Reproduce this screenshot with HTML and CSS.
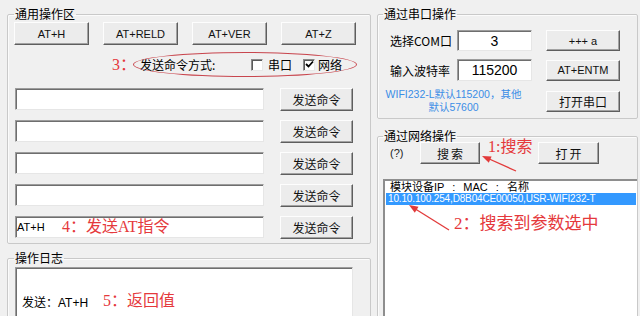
FILE: index.html
```html
<!DOCTYPE html>
<html lang="zh-CN">
<head>
<meta charset="utf-8">
<title>USR-WIFI232 设置</title>
<link rel="stylesheet" href="styles.css">
</head>
<body>
<div class="app">
  <div class="col-left">
    <fieldset class="group general">
      <legend>通用操作区</legend>
      <div class="quick-row">
        <div class="btn quick">AT+H</div>
        <div class="btn quick">AT+RELD</div>
        <div class="btn quick">AT+VER</div>
        <div class="btn quick">AT+Z</div>
      </div>
      <div class="mode-row">
        <span class="note n3">3：</span>
        <div class="ellipse">
          <span class="mode-label">发送命令方式:</span>
          <span class="box b1"></span><span class="chk-label">串口</span>
          <span class="box b2"><svg width="9" height="9" viewBox="0 0 9 9"><polyline points="1,4 3.5,6.5 8,1.5" fill="none" stroke="#000" stroke-width="1.8"/></svg></span><span class="chk-label">网络</span>
        </div>
      </div>
      <div class="cmd-list">
        <div class="cmd-row"><div class="field wide"></div><div class="btn send">发送命令</div></div>
        <div class="cmd-row"><div class="field wide"></div><div class="btn send">发送命令</div></div>
        <div class="cmd-row"><div class="field wide"></div><div class="btn send">发送命令</div></div>
        <div class="cmd-row"><div class="field wide"></div><div class="btn send">发送命令</div></div>
        <div class="cmd-row"><div class="field wide filled"><span class="cmd-text">AT+H</span><span class="note n4">4：发送AT指令</span></div><div class="btn send">发送命令</div></div>
      </div>
    </fieldset>
    <fieldset class="group log">
      <legend>操作日志</legend>
      <div class="field logbox">
        <span class="log-line">发送：AT+H</span>
        <span class="note n5">5：返回值</span>
      </div>
    </fieldset>
  </div>
  <div class="col-right">
    <fieldset class="group serial">
      <legend>通过串口操作</legend>
      <div class="serial-grid">
        <span class="s-label">选择COM口</span>
        <div class="field num">3</div>
        <div class="btn s-btn">+++ a</div>
        <span class="s-label">输入波特率</span>
        <div class="field num">115200</div>
        <div class="btn s-btn">AT+ENTM</div>
        <div class="hint">WIFI232-L默认115200，其他<br>默认57600</div>
        <div class="btn s-btn cjk">打开串口</div>
      </div>
    </fieldset>
    <fieldset class="group net">
      <legend>通过网络操作</legend>
      <div class="net-row">
        <span class="help">(?)</span>
        <div class="btn net-btn search">搜索</div>
        <span class="note n1">1:搜索</span>
        <div class="btn net-btn open">打开</div>
      </div>
      <div class="listbox">
        <div class="list-head">模块设备IP : MAC : 名称</div>
        <div class="list-item selected">10.10.100.254,D8B04CE00050,USR-WIFI232-T</div>
        <div class="note n2">2：搜索到参数选中</div>
      </div>
    </fieldset>
  </div>
</div>
<svg class="arrows" width="640" height="316" viewBox="0 0 640 316">
  <line x1="516" y1="171" x2="487" y2="158" stroke="#e23a3a" stroke-width="1.3"/>
  <polygon points="482,156 491.6,156.4 488.8,162.8" fill="#e23a3a"/>
  <line x1="449" y1="230" x2="413" y2="207.5" stroke="#e23a3a" stroke-width="1.3"/>
  <polygon points="409,205 418.5,206.8 414.8,212.8" fill="#e23a3a"/>
</svg>
</body>
</html>
```
FILE: styles.css
```css
* { box-sizing: border-box; }
html, body { margin: 0; }
body {
  width: 640px;
  height: 316px;
  overflow: hidden;
  position: relative;
  background: #f0f0f0;
  font-family: "Liberation Sans", "Noto Sans CJK SC", sans-serif;
  font-size: 12px;
  color: #000;
}
.app { display: flex; padding: 7px 0 0 7px; gap: 6px; }
.col-left { width: 364px; display: flex; flex-direction: column; gap: 7px; }
.col-right { width: 261px; display: flex; flex-direction: column; gap: 11px; }

.group {
  margin: 0;
  min-width: 0;
  border: 1px solid #c9c9c9;
  border-radius: 2px;
  box-shadow: inset 1px 1px 0 #fbfbfb;
}
.group > legend {
  padding: 0 1px;
  font-family: "Noto Sans CJK SC", sans-serif;
  font-size: 12px;
  line-height: 14px;
}
.general { padding: 1px 6px 3px 6px; }
.log { padding: 2px 6px 0 6px; height: 80px; }
.serial { padding: 9px 5px 5px 5px; }
.net { padding: 0 5px; height: 200px; }
.net > legend { line-height: 12px; }

.btn {
  display: flex;
  align-items: center;
  justify-content: center;
  height: 23px;
  background: #ececec;
  border: 1px solid;
  border-color: #fdfdfd #5e5e5e #5e5e5e #fdfdfd;
  box-shadow: inset -1px -1px 0 #a2a2a2;
  font-size: 11px;
  color: #111;
}
.cjk, .send, .net-btn { font-size: 12px; }

.field {
  background: #fff;
  border: 1px solid;
  border-color: #9c9c9c #e6e6e6 #e6e6e6 #9c9c9c;
  box-shadow: inset 1px 1px 0 #6e6e6e;
}

.note {
  color: #e5393c;
  font-family: "Liberation Serif", "Noto Sans CJK SC", serif;
  font-size: 16px;
  line-height: 18px;
  white-space: nowrap;
}

.quick-row { display: flex; gap: 14px; }
.quick { width: 75px; }

.mode-row { display: flex; align-items: center; margin-top: 7px; height: 25px; }
.n3 { margin-left: 98px; width: 21px; }
.ellipse {
  width: 224px;
  height: 25px;
  border: 1px solid #c8464e;
  border-radius: 50%;
  display: flex;
  align-items: center;
  padding-left: 6px;
}
.mode-label { width: 111px; font-family: "Noto Sans CJK SC", sans-serif; }
.box {
  width: 12px;
  height: 12px;
  background: #fff;
  border: 1px solid;
  border-color: #8a8a8a #e8e8e8 #e8e8e8 #8a8a8a;
  box-shadow: inset 1px 1px 0 #5a5a5a;
  display: flex;
  align-items: center;
  justify-content: center;
}
.chk-label { margin-left: 5px; }
.b2 { margin-left: 11px; }
.b2 + .chk-label { margin-left: 3px; }

.cmd-list { margin-top: 11px; display: flex; flex-direction: column; gap: 8px; }
.cmd-row { display: flex; height: 24px; align-items: flex-start; }
.wide { margin-left: 1px; width: 249px; height: 22px; }
.send { margin-left: 16px; width: 73px; }
.filled { display: flex; align-items: center; padding-left: 1px; }
.cmd-text { width: 45px; font-size: 11px; }

.logbox { margin-left: 1px; width: 338px; height: 60px; display: flex; align-items: center; padding: 8px 0 0 6px; }
.log-line { width: 81px; font-size: 12px; }

.serial-grid {
  display: grid;
  grid-template-columns: 74px 75px 14px 74px;
  grid-template-rows: 21px 22px 24px;
  row-gap: 8px;
}
.s-label { grid-column: 1; padding-left: 7px; align-self: center; font-family: "Noto Sans CJK SC", sans-serif; }
.num { grid-column: 2; display: flex; align-items: center; justify-content: center; font-size: 14px; }
.s-btn { grid-column: 4; height: 21px; align-self: center; }
.hint {
  grid-column: 1 / 3;
  color: #3b8de6;
  font-size: 10.5px;
  line-height: 13px;
  text-align: center;
  padding: 0 8px 0 0;
  align-self: center;
  white-space: nowrap;
}

.net-row { display: flex; align-items: center; height: 22px; }
.help { margin-left: 7px; width: 30px; font-size: 11px; color: #222; }
.net-btn { height: 22px; letter-spacing: 2px; padding-left: 2px; }
.search { width: 60px; }
.open { width: 61px; }
.n1 { margin-left: 8px; width: 50px; align-self: flex-start; margin-top: -4px; }

.listbox {
  margin-top: 15px;
  width: 254px;
  height: 150px;
  background: #fff;
  border-top: 2px solid #8e8e8e;
  border-left: 2px solid #8e8e8e;
  padding: 0 1px;
}
.list-head {
  height: 12px;
  line-height: 12px;
  padding-left: 4px;
  white-space: nowrap;
  word-spacing: 5px;
  font-size: 11px;
  font-family: "Liberation Sans", "Noto Sans CJK SC", sans-serif;
  overflow: hidden;
}
.list-item { height: 12px; line-height: 12px; padding-left: 2px; font-size: 10px; letter-spacing: -0.15px; white-space: nowrap; }
.selected { background: #3399ff; color: #fff; }
.n2 { margin-top: 9px; padding-left: 68px; font-size: 17px; line-height: 20px; }

.arrows { position: absolute; left: 0; top: 0; pointer-events: none; }
```
